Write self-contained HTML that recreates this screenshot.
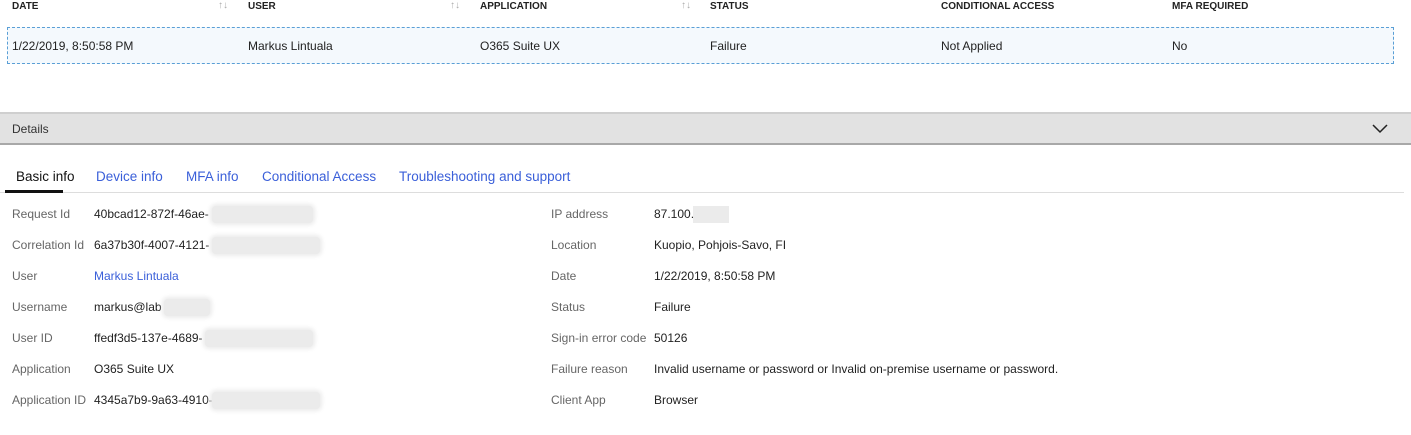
<!DOCTYPE html>
<html><head><style>
body{margin:0;width:1411px;height:435px;background:#fff;font-family:"Segoe UI","Liberation Sans",sans-serif;color:#000;position:relative;overflow:hidden}
.a{position:absolute;white-space:nowrap}
.h{font-size:10px;font-weight:bold;top:1px;color:#222}
.s{font-size:10px;color:#aaa;top:0px}
.r{font-size:12px;top:39px;color:#222}
.t{font-size:13.5px;top:169px;color:#3a5fd9}
.l{font-size:12px;color:#666}
.v{font-size:12px;color:#222}
.b{position:absolute;height:17px;background:#ebebeb;border-radius:4px;box-shadow:0 0 4px 2px #ebebeb}
</style></head><body>
<div class="a h" style="left:12px">DATE</div>
<div class="a s" style="left:218px">↑↓</div>
<div class="a h" style="left:248px">USER</div>
<div class="a s" style="left:450px">↑↓</div>
<div class="a h" style="left:480px">APPLICATION</div>
<div class="a s" style="left:681px">↑↓</div>
<div class="a h" style="left:710px">STATUS</div>
<div class="a h" style="left:941px">CONDITIONAL ACCESS</div>
<div class="a h" style="left:1172px">MFA REQUIRED</div>
<div class="a" style="left:7px;top:27px;width:1385px;height:35px;background:#f4f9fd;border:1px dashed #5a9fd6"></div>
<div class="a r" style="left:12px">1/22/2019, 8:50:58 PM</div>
<div class="a r" style="left:248px">Markus Lintuala</div>
<div class="a r" style="left:480px">O365 Suite UX</div>
<div class="a r" style="left:710px">Failure</div>
<div class="a r" style="left:941px">Not Applied</div>
<div class="a r" style="left:1172px">No</div>
<div class="a" style="left:0;top:112px;width:1411px;height:29px;background:#e2e2e2;border-top:2px solid #cfcfcf;border-bottom:2px solid #a8a8a8"></div>
<div class="a" style="left:12px;top:122px;font-size:12px;color:#333">Details</div>
<svg class="a" style="left:1372px;top:124px" width="16" height="10"><path d="M1 1 L8 8 L15 1" fill="none" stroke="#222" stroke-width="1.5"/></svg>
<div class="a" style="left:0;top:192px;width:1404px;height:1px;background:#ddd"></div>
<div class="a" style="left:5px;top:190px;width:58px;height:3px;background:#111"></div>
<div class="a t" style="left:16px;color:#111">Basic info</div>
<div class="a t" style="left:96px">Device info</div>
<div class="a t" style="left:186px">MFA info</div>
<div class="a t" style="left:262px">Conditional Access</div>
<div class="a t" style="left:399px">Troubleshooting and support</div>

<div class="a l" style="left:12px;top:207px">Request Id</div><div class="a v" style="left:94px;top:207px">40bcad12-872f-46ae-</div><div class="b" style="left:212px;top:206px;width:101px"></div>
<div class="a l" style="left:12px;top:238px">Correlation Id</div><div class="a v" style="left:94px;top:238px">6a37b30f-4007-4121-</div><div class="b" style="left:212px;top:237px;width:108px"></div>
<div class="a l" style="left:12px;top:269px">User</div><div class="a v" style="left:94px;top:269px;color:#3a5fd9">Markus Lintuala</div>
<div class="a l" style="left:12px;top:300px">Username</div><div class="a v" style="left:94px;top:300px">markus@lab</div><div class="b" style="left:164px;top:299px;width:46px"></div>
<div class="a l" style="left:12px;top:331px">User ID</div><div class="a v" style="left:94px;top:331px">ffedf3d5-137e-4689-</div><div class="b" style="left:205px;top:330px;width:108px"></div>
<div class="a l" style="left:12px;top:362px">Application</div><div class="a v" style="left:94px;top:362px">O365 Suite UX</div>
<div class="a l" style="left:12px;top:393px">Application ID</div><div class="a v" style="left:94px;top:393px">4345a7b9-9a63-4910-</div><div class="b" style="left:212px;top:392px;width:108px"></div>

<div class="a l" style="left:551px;top:207px">IP address</div><div class="a v" style="left:654px;top:207px">87.100.</div><div class="b" style="left:693px;top:206px;width:36px;box-shadow:none;border-radius:0"></div>
<div class="a l" style="left:551px;top:238px">Location</div><div class="a v" style="left:654px;top:238px">Kuopio, Pohjois-Savo, FI</div>
<div class="a l" style="left:551px;top:269px">Date</div><div class="a v" style="left:654px;top:269px">1/22/2019, 8:50:58 PM</div>
<div class="a l" style="left:551px;top:300px">Status</div><div class="a v" style="left:654px;top:300px">Failure</div>
<div class="a l" style="left:551px;top:331px">Sign-in error code</div><div class="a v" style="left:654px;top:331px">50126</div>
<div class="a l" style="left:551px;top:362px">Failure reason</div><div class="a v" style="left:654px;top:362px">Invalid username or password or Invalid on-premise username or password.</div>
<div class="a l" style="left:551px;top:393px">Client App</div><div class="a v" style="left:654px;top:393px">Browser</div>
</body></html>
